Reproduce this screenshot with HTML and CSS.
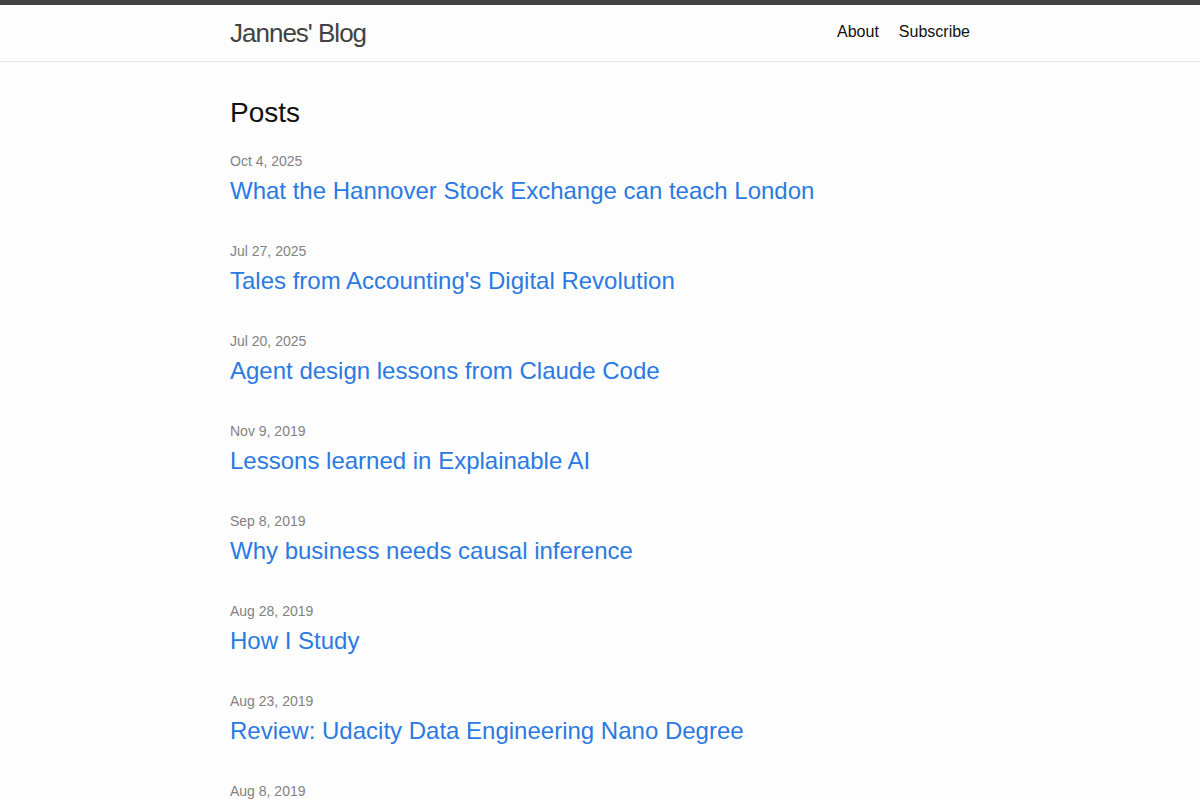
FILE: index.html
```html
<!DOCTYPE html>
<html lang="en">
<head>
<meta charset="utf-8">
<title>Jannes' Blog</title>
<link rel="stylesheet" href="styles.css">
</head>
<body>
<header class="site-header">
  <div class="wrapper header-inner">
    <a class="site-title" href="#">Jannes' Blog</a>
    <nav class="site-nav">
      <a class="page-link" href="#">About</a>
      <a class="page-link" href="#">Subscribe</a>
    </nav>
  </div>
</header>
<main class="page-content">
  <div class="wrapper">
    <h2 class="post-list-heading">Posts</h2>
    <ul class="post-list">
      <li><span class="post-meta">Oct 4, 2025</span><h3 class="post-title"><a class="post-link" href="#">What the Hannover Stock Exchange can teach London</a></h3></li>
      <li><span class="post-meta">Jul 27, 2025</span><h3 class="post-title"><a class="post-link" href="#">Tales from Accounting's Digital Revolution</a></h3></li>
      <li><span class="post-meta">Jul 20, 2025</span><h3 class="post-title"><a class="post-link" href="#">Agent design lessons from Claude Code</a></h3></li>
      <li><span class="post-meta">Nov 9, 2019</span><h3 class="post-title"><a class="post-link" href="#">Lessons learned in Explainable AI</a></h3></li>
      <li><span class="post-meta">Sep 8, 2019</span><h3 class="post-title"><a class="post-link" href="#">Why business needs causal inference</a></h3></li>
      <li><span class="post-meta">Aug 28, 2019</span><h3 class="post-title"><a class="post-link" href="#">How I Study</a></h3></li>
      <li><span class="post-meta">Aug 23, 2019</span><h3 class="post-title"><a class="post-link" href="#">Review: Udacity Data Engineering Nano Degree</a></h3></li>
      <li><span class="post-meta">Aug 8, 2019</span><h3 class="post-title"><a class="post-link" href="#">Notes on data science</a></h3></li>
    </ul>
  </div>
</main>
</body>
</html>
```
FILE: styles.css
```css
* { box-sizing: border-box; }
html, body { margin: 0; padding: 0; }
body {
  background: #fdfdfd;
  color: #111;
  font-family: "Liberation Sans", Arial, sans-serif;
  font-size: 16px;
  line-height: 1.5;
}
a { text-decoration: none; }
.wrapper {
  max-width: 740px;
  margin: 0 auto;
}
.site-header {
  border-top: 5px solid #424242;
  border-bottom: 1px solid #e8e8e8;
  height: 62px;
}
.header-inner {
  display: flex;
  justify-content: space-between;
  align-items: center;
  height: 56px;
}
.site-title {
  font-size: 26px;
  font-weight: 300;
  letter-spacing: -1px;
  line-height: 54px;
  color: #424242;
}
.site-nav {
  display: flex;
  gap: 20px;
  line-height: 54px;
  margin-top: -2px;
}
.page-link { color: #111; }
.page-content { padding-top: 30px; }
.post-list-heading {
  font-size: 28px;
  font-weight: 400;
  line-height: 42px;
  margin: 0 0 17px;
}
.post-list {
  list-style: none;
  margin: 0;
  padding: 0;
}
.post-list li {
  display: flex;
  flex-direction: column;
  margin-bottom: 32px;
}
.post-meta {
  font-size: 14px;
  line-height: 21px;
  color: #828282;
}
.post-title {
  margin: 0;
  padding-top: 1px;
  font-weight: 400;
  font-size: 24px;
  line-height: 36px;
}
.post-link { color: #2a7ae2; }
```
